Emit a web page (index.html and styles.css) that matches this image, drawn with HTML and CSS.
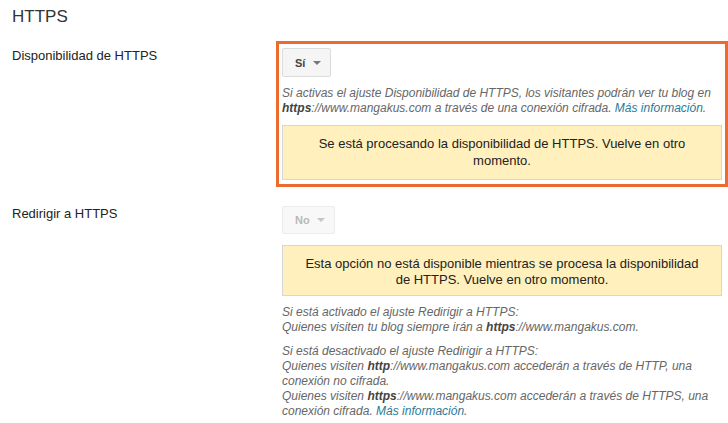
FILE: index.html
```html
<!DOCTYPE html>
<html lang="es">
<head>
    <meta charset="UTF-8">
    <meta name="viewport" content="width=device-width, initial-scale=1.0">
    <title>HTTPS</title>
    <link rel="stylesheet" href="styles.css">
</head>
<body>
    <h2 class="section-title">HTTPS</h2>

    <div class="setting-row">
        <div class="setting-label">Disponibilidad de HTTPS</div>
        <div class="setting-field highlight">
            <button class="dropdown">Sí <span class="caret"></span></button>
            <p class="help">Si activas el ajuste Disponibilidad de HTTPS, los visitantes podrán ver tu blog en <b>https</b>://www.mangakus.com a través de una conexión cifrada. <a href="#">Más información</a>.</p>
            <div class="notice">Se está procesando la disponibilidad de HTTPS. Vuelve en otro momento.</div>
        </div>
    </div>

    <div class="setting-row">
        <div class="setting-label">Redirigir a HTTPS</div>
        <div class="setting-field">
            <button class="dropdown" disabled>No <span class="caret"></span></button>
            <div class="notice notice-wide">Esta opción no está disponible mientras se procesa la disponibilidad de HTTPS. Vuelve en otro momento.</div>
            <p class="help">Si está activado el ajuste Redirigir a HTTPS:<br>
                Quienes visiten tu blog siempre irán a <b>https</b>://www.mangakus.com.</p>
            <p class="help">Si está desactivado el ajuste Redirigir a HTTPS:<br>
                Quienes visiten <b>http</b>://www.mangakus.com accederán a través de HTTP, una conexión no cifrada.<br>
                Quienes visiten <b>https</b>://www.mangakus.com accederán a través de HTTPS, una conexión cifrada. <a href="#">Más información</a>.</p>
        </div>
    </div>
</body>
</html>
```

FILE: styles.css
```css
body {
    font-family: "Liberation Sans", Arial, sans-serif;
    margin: 0;
    background: #fff;
    color: #222;
    font-size: 13px;
}
.section-title {
    font-size: 17px;
    font-weight: normal;
    color: #333;
    margin: 0;
    padding: 6px 12px 0;
    line-height: 22px;
}
.setting-row {
    display: flex;
    margin-top: 13px;
}
.setting-row + .setting-row {
    margin-top: 12px;
}
.setting-label {
    width: 264px;
    padding: 7px 0 0 12px;
    line-height: 16px;
}
.setting-field {
    flex: 1;
    border: 3px solid transparent;
    padding: 4px 3px 3px;
}
.setting-field.highlight {
    border-color: #ec6c30;
    padding-bottom: 4px;
}
.dropdown {
    display: flex;
    align-items: center;
    gap: 8px;
    height: 29px;
    padding: 0 9px 0 12px;
    background: #f5f5f5;
    border: 1px solid #dcdcdc;
    border-radius: 2px;
    font-family: inherit;
    font-size: 11px;
    font-weight: bold;
    color: #444;
}
.dropdown:disabled {
    height: 28px;
    gap: 7px;
    background: #f8f8f8;
    border-color: #ececec;
    color: #b8b8b8;
}
.caret {
    border-left: 4px solid transparent;
    border-right: 4px solid transparent;
    border-top: 4px solid #777;
}
.dropdown:disabled .caret {
    border-top-color: #c4c4c4;
}
.help {
    margin: 9px 0 9px;
    font-size: 12px;
    font-style: italic;
    line-height: 15px;
    color: #666;
}
.help b {
    color: #444;
}
.help a {
    color: #2a7a98;
    text-decoration: none;
}
.notice {
    background: #fff0bd;
    border: 1px solid #d6d6d6;
    text-align: center;
    padding: 9px 30px 10px;
    line-height: 17px;
    color: #222;
}
.notice-wide {
    margin: 11px 0 9px;
    padding: 10px 20px 7px;
    line-height: 16px;
}
```
